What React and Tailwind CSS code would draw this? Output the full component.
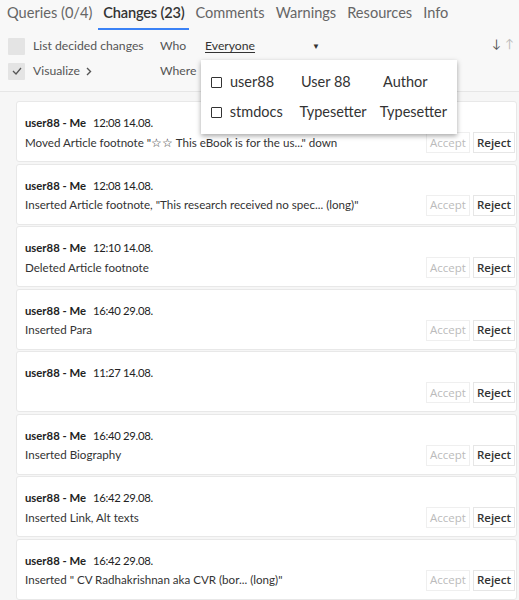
import React from 'react';

const changes = [
  { time: '12:08 14.08.', text: 'Moved Article footnote "☆☆ This eBook is for the us..." down' },
  { time: '12:08 14.08.', text: 'Inserted Article footnote, "This research received no spec... (long)"' },
  { time: '12:10 14.08.', text: 'Deleted Article footnote' },
  { time: '16:40 29.08.', text: 'Inserted Para' },
  { time: '11:27 14.08.', text: '' },
  { time: '16:40 29.08.', text: 'Inserted Biography' },
  { time: '16:42 29.08.', text: 'Inserted Link, Alt texts' },
  { time: '16:42 29.08.', text: 'Inserted " CV Radhakrishnan aka CVR (bor... (long)"' },
];

const people = [
  { login: 'user88', name: 'User 88', role: 'Author' },
  { login: 'stmdocs', name: 'Typesetter', role: 'Typesetter' },
];

function Tabs() {
  const tabs = ['Queries (0/4)', 'Changes (23)', 'Comments', 'Warnings', 'Resources', 'Info'];
  return (
    <div className="flex gap-[1px] px-[2px] h-[30px] items-end">
      {tabs.map((t, i) => (
        <div
          key={t}
          className={`px-[5px] pb-[5px] text-[14.6px] leading-[20px] border-b-2 ${
            i === 1 ? 'border-[#3b82f6] text-[#333] font-semibold tracking-[-0.2px]' : 'border-transparent text-[#666]'
          }`}
        >
          {t}
        </div>
      ))}
    </div>
  );
}

function Filters() {
  return (
    <div className="relative px-[8px] pt-[7px] pb-[11px] border-b border-[#e6e6e6] text-[12.2px] text-[#555]">
      <div className="flex items-center h-[18px]">
        <span className="w-[17px] h-[17px] bg-[#e4e4e4] rounded-[1px]" />
        <span className="ml-[8px] w-[127px]">List decided changes</span>
        <span className="w-[45px]">Who</span>
        <span className="underline underline-offset-2 text-[#333] w-[107px]">Everyone</span>
        <span className="text-[8px] text-[#333]">▼</span>
        <span className="ml-auto mr-[-3px] flex gap-[4px] text-[12px] -mt-[5px]">
          <span className="text-[#555]">↓</span>
          <span className="text-[#bbb]">↑</span>
        </span>
      </div>
      <div className="flex items-center h-[18px] mt-[7px]">
        <span className="w-[17px] h-[17px] bg-[#e4e4e4] rounded-[1px] flex items-center justify-center">
          <svg width="10" height="8" viewBox="0 0 10 8" fill="none" stroke="#555" strokeWidth="1.3">
            <path d="M1 4l3 3 5-6" />
          </svg>
        </span>
        <span className="ml-[8px] w-[127px] flex items-center gap-[6px]">
          Visualize
          <svg width="6" height="9" viewBox="0 0 6 9" fill="none" stroke="#555" strokeWidth="1.4">
            <path d="M1 1l3.5 3.5L1 8" />
          </svg>
        </span>
        <span>Where</span>
      </div>

      {/* open "Who" dropdown */}
      <div className="absolute left-[201px] top-[30px] w-[256px] bg-white shadow-[0_2px_5px_rgba(0,0,0,0.35)] py-[7px] px-[10px] z-10 text-[14.5px] text-[#333]">
        {people.map((p) => (
          <div key={p.login} className="flex items-center h-[30px]">
            <span className="w-[11px] h-[11px] border border-[#333] rounded-[1px]" />
            <span className="ml-[8px] w-[71px]">{p.login}</span>
            <span className="w-[82px]">{p.name}</span>
            <span>{p.role}</span>
          </div>
        ))}
      </div>
    </div>
  );
}

function ChangeCard({ time, text }) {
  return (
    <div className="bg-white border border-[#e8e8e8] rounded-[3px] h-[61px] pl-[8px] pr-[1px] flex flex-col">
      <div className="mt-[13px] leading-[16px] text-[#222] flex items-baseline">
        <span className="font-bold text-[11.3px]">user88 - Me</span>
        <span className="ml-[7px] text-[11.3px] tracking-[-0.3px]">{time}</span>
      </div>
      <div className="flex items-center mt-[1px]">
        <span className="text-[11.6px] text-[#333] flex-1 truncate">{text}</span>
        <div className="flex gap-[3px] font-['Open_Sans',sans-serif] text-[11.5px]">
          <button className="h-[21px] px-[3px] border border-[#efefef] text-[#bbb]">Accept</button>
          <button className="h-[21px] px-[3px] border border-[#e6e6e6] text-[#333] font-semibold">Reject</button>
        </div>
      </div>
    </div>
  );
}

export default function App() {
  return (
    <div className="w-[519px] h-[600px] overflow-hidden bg-[#f6f6f6] font-['Lato',sans-serif]">
      <div className="bg-[#f8f8f8]">
        <Tabs />
        <Filters />
      </div>
      <div className="pl-[16px] pr-[2px] pt-[9px] flex flex-col gap-[1.5px]">
        {changes.map((c, i) => (
          <ChangeCard key={i} {...c} />
        ))}
      </div>
    </div>
  );
}
